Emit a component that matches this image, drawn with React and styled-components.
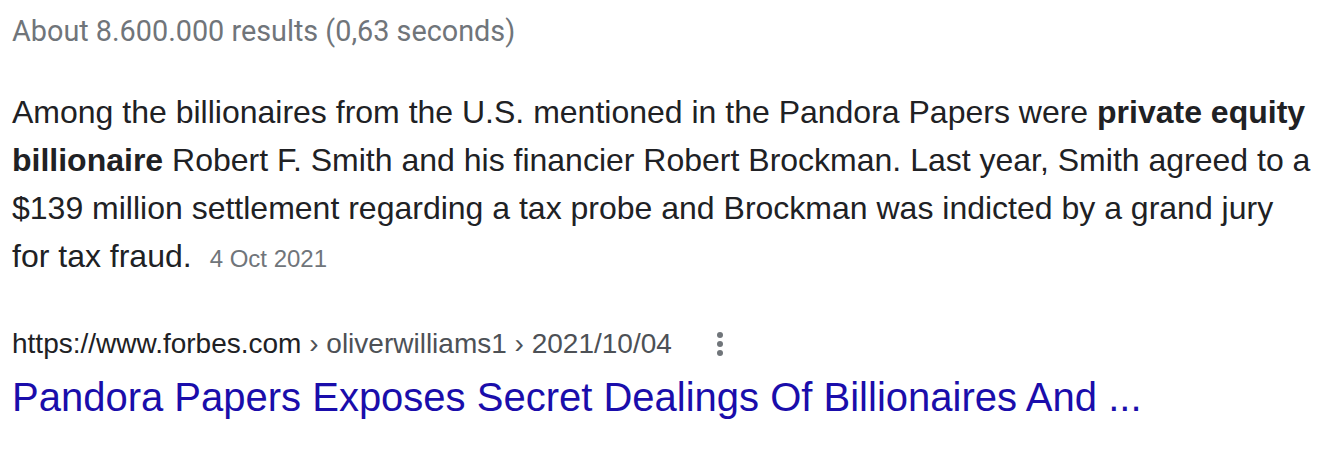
import React from "react";
import styled, { createGlobalStyle } from "styled-components";

const Global = createGlobalStyle`
  html, body { margin: 0; padding: 0; background: #fff; }
  body { font-family: "Liberation Sans", Arial, sans-serif; }
`;

const Page = styled.div`
  width: 1342px;
  height: 460px;
  box-sizing: border-box;
  padding: 13px 0 0 12px;
  overflow: hidden;
`;

const Stats = styled.div`
  font-family: Roboto, "Liberation Sans", sans-serif;
  font-size: 28.8px;
  line-height: 36px;
  color: #70757a;
`;

const Snippet = styled.div`
  margin-top: 39px;
  width: 1300px;
  font-size: 32px;
  line-height: 48px;
  color: #202124;
  b { font-weight: 700; }
`;

const DateTag = styled.span`
  margin-left: 18px;
  font-size: 24px;
  color: #70757a;
`;

const UrlRow = styled.div`
  margin-top: 43px;
  display: flex;
  align-items: center;
  font-size: 28px;
  line-height: 36px;
`;

const Host = styled.span`
  color: #202124;
`;

const Crumbs = styled.span`
  color: #4d5156;
`;

const MoreButton = styled.span`
  margin-left: 44px;
  display: inline-flex;
  align-items: center;
`;

const Title = styled.a`
  display: block;
  margin-top: 9px;
  font-size: 40px;
  line-height: 52px;
  color: #1a0dab;
  text-decoration: none;
`;

export default function App() {
  return (
    <Page>
      <Global />
      <Stats>About 8.600.000 results (0,63 seconds)</Stats>
      <Snippet>
        Among the billionaires from the U.S. mentioned in the Pandora Papers were{" "}
        <b>private equity billionaire</b> Robert F. Smith and his financier Robert
        Brockman. Last year, Smith agreed to a $139 million settlement regarding a tax
        probe and Brockman was indicted by a grand jury for tax fraud.
        <DateTag>4 Oct 2021</DateTag>
      </Snippet>
      <UrlRow>
        <Host>https://www.forbes.com</Host>
        <Crumbs>&nbsp;› oliverwilliams1 › 2021/10/04</Crumbs>
        <MoreButton>
          <svg width="8" height="26" viewBox="0 0 8 26">
            <circle cx="4" cy="4" r="3" fill="#70757a" />
            <circle cx="4" cy="13" r="3" fill="#70757a" />
            <circle cx="4" cy="22" r="3" fill="#70757a" />
          </svg>
        </MoreButton>
      </UrlRow>
      <Title href="#">Pandora Papers Exposes Secret Dealings Of Billionaires And ...</Title>
    </Page>
  );
}
